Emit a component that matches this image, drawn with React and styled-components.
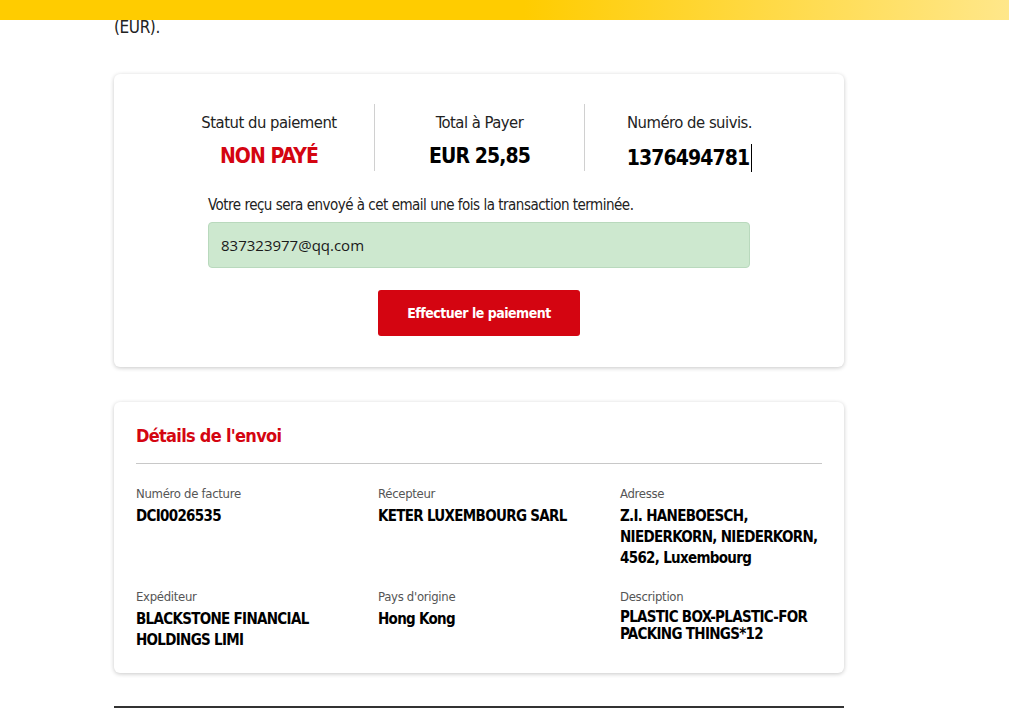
import styled, { createGlobalStyle } from "styled-components";

const GlobalStyle = createGlobalStyle`
    body {
        margin: 0;
        background: #ffffff;
        font-family: "Liberation Sans Narrow", "DejaVu Sans Condensed", "Liberation Sans", sans-serif;
        color: #000;
    }
`;

const red = "#d40511";

const TopBar = styled.div`
    position: fixed;
    top: 0;
    left: 0;
    right: 0;
    height: 20px;
    background: linear-gradient(90deg, #ffcc00 0%, #ffcc00 52%, #ffe78a 100%);
    z-index: 2;
`;

const Page = styled.div`
    width: 730px;
    margin-left: 114px;
    padding-top: 16px;
`;

const Intro = styled.p`
    margin: 0 0 36px 0;
    font-size: 17px;
    line-height: 22px;
    letter-spacing: -0.4px;
    color: #222;
`;

const Card = styled.section`
    background: #fff;
    border-radius: 6px;
    box-shadow: 0 1px 4px rgba(0, 0, 0, 0.22);
    padding: ${(p) => p.$padding};
    margin-bottom: ${(p) => p.$gap};
`;

const StatsRow = styled.div`
    width: 630px;
    margin: 0 auto;
    display: grid;
    grid-template-columns: repeat(3, 1fr);
`;

const Stat = styled.div`
    display: flex;
    flex-direction: column;
    align-items: center;
    padding: 9px 0 6px;
    border-left: ${(p) => (p.$first ? "none" : "1px solid #d0d0d0")};
    height: 67px;
    box-sizing: border-box;
`;

const StatLabel = styled.div`
    font-size: 16.5px;
    line-height: 20px;
    letter-spacing: -0.5px;
    color: #222;
`;

const StatValue = styled.div`
    margin-top: 11px;
    font-size: 21px;
    line-height: 24px;
    font-weight: 700;
    letter-spacing: -0.9px;
    color: ${(p) => (p.$red ? red : "#000")};
    display: flex;
    align-items: center;
`;

const Caret = styled.span`
    display: inline-block;
    width: 1px;
    height: 28px;
    background: #000;
    margin-left: 2px;
`;

const EmailBlock = styled.div`
    width: 542px;
    margin: 25px auto 0;
`;

const EmailNote = styled.div`
    font-size: 15px;
    line-height: 18px;
    letter-spacing: -0.5px;
    color: #222;
    margin-bottom: 8px;
`;

const EmailInput = styled.div`
    height: 46px;
    box-sizing: border-box;
    background: #cde8cf;
    border: 1px solid #b9d9bd;
    border-radius: 4px;
    padding: 0 12px;
    display: flex;
    align-items: center;
    font-family: "Open Sans", "Noto Sans", sans-serif;
    font-size: 15px;
    color: #1a1a1a;
`;

const ButtonRow = styled.div`
    display: flex;
    justify-content: center;
    margin-top: 22px;
`;

const PayButton = styled.button`
    width: 202px;
    height: 46px;
    border: none;
    border-radius: 3px;
    background: ${red};
    color: #fff;
    font-family: inherit;
    font-size: 14px;
    font-weight: 700;
    letter-spacing: -0.5px;
    cursor: pointer;
`;

const Title = styled.h2`
    margin: 0;
    font-size: 18px;
    line-height: 22px;
    font-weight: 700;
    letter-spacing: -0.7px;
    color: ${red};
    padding-bottom: 16px;
    border-bottom: 1px solid #c8c8c8;
`;

const DetailsGrid = styled.div`
    display: grid;
    grid-template-columns: 242px 242px 1fr;
    row-gap: 20px;
    margin-top: 22px;
`;

const Field = styled.div`
    display: flex;
    flex-direction: column;
`;

const FieldLabel = styled.div`
    font-size: 13px;
    line-height: 16px;
    letter-spacing: -0.3px;
    color: #555;
    margin-bottom: 4px;
`;

const FieldValue = styled.div`
    font-size: 15px;
    line-height: ${(p) => (p.$tight ? "17px" : "21px")};
    font-weight: 700;
    letter-spacing: -0.7px;
    color: #000;
`;

const BottomRule = styled.hr`
    margin: 0;
    border: none;
    border-top: 2px solid #333;
`;

const details = [
    { label: "Numéro de facture", value: "DCI0026535" },
    { label: "Récepteur", value: "KETER LUXEMBOURG SARL" },
    { label: "Adresse", value: "Z.I. HANEBOESCH, NIEDERKORN, NIEDERKORN, 4562, Luxembourg" },
    { label: "Expéditeur", value: "BLACKSTONE FINANCIAL HOLDINGS LIMI" },
    { label: "Pays d'origine", value: "Hong Kong" },
    { label: "Description", value: "PLASTIC BOX-PLASTIC-FOR PACKING THINGS*12", tight: true },
];

export default function App() {
    return (
        <>
            <GlobalStyle />
            <TopBar />
            <Page>
                <Intro>(EUR).</Intro>

                <Card $padding="30px 0 31px" $gap="35px">
                    <StatsRow>
                        <Stat $first>
                            <StatLabel>Statut du paiement</StatLabel>
                            <StatValue $red>NON PAYÉ</StatValue>
                        </Stat>
                        <Stat>
                            <StatLabel>Total à Payer</StatLabel>
                            <StatValue>EUR 25,85</StatValue>
                        </Stat>
                        <Stat>
                            <StatLabel>Numéro de suivis.</StatLabel>
                            <StatValue>1376494781<Caret /></StatValue>
                        </Stat>
                    </StatsRow>

                    <EmailBlock>
                        <EmailNote>Votre reçu sera envoyé à cet email une fois la transaction terminée.</EmailNote>
                        <EmailInput>837323977@qq.com</EmailInput>
                    </EmailBlock>

                    <ButtonRow>
                        <PayButton>Effectuer le paiement</PayButton>
                    </ButtonRow>
                </Card>

                <Card $padding="23px 22px 22px" $gap="33px">
                    <Title>Détails de l'envoi</Title>
                    <DetailsGrid>
                        {details.map((d) => (
                            <Field key={d.label}>
                                <FieldLabel>{d.label}</FieldLabel>
                                <FieldValue $tight={d.tight}>{d.value}</FieldValue>
                            </Field>
                        ))}
                    </DetailsGrid>
                </Card>

                <BottomRule />
            </Page>
        </>
    );
}
